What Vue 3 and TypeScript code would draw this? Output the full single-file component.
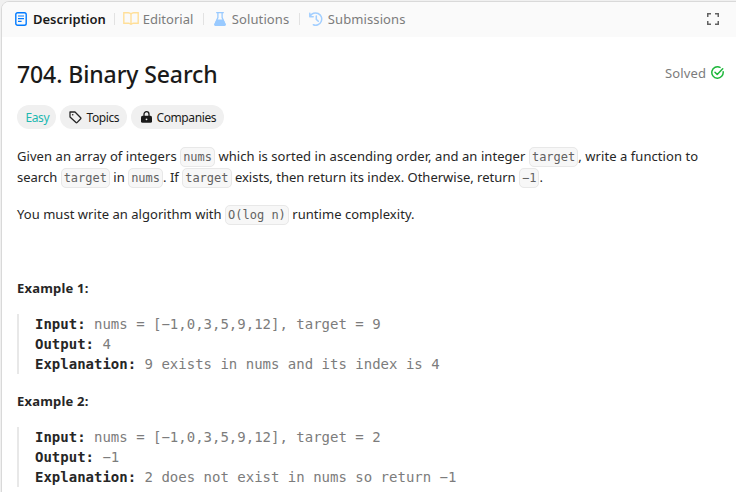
<script setup lang="ts">
interface Part {
  text: string
  code?: boolean
}
interface Row {
  label: string
  value: string
}
interface Example {
  title: string
  rows: Row[]
}

const statement: Part[][] = [
  [
    { text: 'Given an array of integers ' },
    { text: 'nums', code: true },
    { text: ' which is sorted in ascending order, and an integer ' },
    { text: 'target', code: true },
    { text: ', write a function to' },
  ],
  [
    { text: 'search ' },
    { text: 'target', code: true },
    { text: ' in ' },
    { text: 'nums', code: true },
    { text: '. If ' },
    { text: 'target', code: true },
    { text: ' exists, then return its index. Otherwise, return ' },
    { text: '-1', code: true },
    { text: '.' },
  ],
]

const examples: Example[] = [
  {
    title: 'Example 1:',
    rows: [
      { label: 'Input:', value: 'nums = [-1,0,3,5,9,12], target = 9' },
      { label: 'Output:', value: '4' },
      { label: 'Explanation:', value: '9 exists in nums and its index is 4' },
    ],
  },
  {
    title: 'Example 2:',
    rows: [
      { label: 'Input:', value: 'nums = [-1,0,3,5,9,12], target = 2' },
      { label: 'Output:', value: '-1' },
      { label: 'Explanation:', value: '2 does not exist in nums so return -1' },
    ],
  },
]
</script>

<template>
  <div class="page">
    <main class="panel">
      <header class="tabs">
        <div class="tab active">
          <svg class="icon doc" viewBox="0 0 12 14" fill="none" stroke="#007aff">
            <rect x="0.8" y="0.8" width="10.4" height="12.4" rx="1.8" stroke-width="1.4" />
            <path d="M3 4h6M3 6.6h6M3 9.3h3.6" stroke-width="1.2" />
          </svg>
          <span class="label">Description</span>
        </div>
        <i class="sep"></i>
        <div class="tab editorial">
          <svg class="icon book" viewBox="0 0 16 13" fill="none" stroke="#ffdf99" stroke-width="1.4">
            <path d="M8 2.2C7.4 1.2 6.5.8 5.3.8H.8v10.4h4.7c1.2 0 2 .4 2.5 1.2.5-.8 1.3-1.2 2.5-1.2h4.7V.8h-4.5C9.5.8 8.6 1.2 8 2.2zM8 2.2v10" />
          </svg>
          <span class="label">Editorial</span>
        </div>
        <i class="sep"></i>
        <div class="tab solutions">
          <svg class="icon flask" viewBox="0 0 12 14">
            <path d="M2.2.7h7.6M3.9.8v4.8L1.2 11.8M8.1.8v4.8l2.7 6.2" fill="none" stroke="#99caff" stroke-width="1.3" />
            <path d="M2.6 7.500h6.800l2.400 4.400c.5 1-.1 2-1.200 2H1.400c-1.100 0-1.700-1-1.200-2z" fill="#99caff" />
          </svg>
          <span class="label">Solutions</span>
        </div>
        <i class="sep"></i>
        <div class="tab submissions">
          <svg class="icon history" viewBox="0 0 14 14" fill="none" stroke="#a3cfff" stroke-width="1.5" stroke-linecap="round" stroke-linejoin="round">
            <path d="M.8 1.3v3.4h3.4M1.1 4.4A6.1 6.1 0 1 1 4.3 12.7M7.3 4v3.4l2 1.8" />
          </svg>
          <span class="label">Submissions</span>
        </div>
        <svg class="expand" viewBox="0 0 12 12" fill="none" stroke="#626262" stroke-width="1.5">
          <path d="M.75 4V.75H4M8 .75h3.25V4M11.25 8v3.25H8M4 11.25H.75V8" />
        </svg>
      </header>

      <section class="content">
        <div class="heading">
          <h1>704. Binary Search</h1>
          <div class="solved">
            <span class="solved-text">Solved</span>
            <svg class="check" viewBox="0 0 13 13" fill="none" stroke="#20b83d" stroke-width="1.5" stroke-linecap="round" stroke-linejoin="round">
              <path d="M9 1.35A5.7 5.7 0 1 0 12.15 5.7M4 6.3l2.2 2.2 5.5-5.7" />
            </svg>
          </div>
        </div>

        <div class="pills">
          <span class="pill easy"><span>Easy</span></span>
          <span class="pill topics">
            <svg class="tag" viewBox="0 0 13 13" fill="none" stroke="#262626" stroke-width="1.3" stroke-linejoin="round">
              <path d="M1 1h5l5.7 5.7a.7.7 0 0 1 0 1L8 11.6a.7.7 0 0 1-1 0L1 6z" />
              <circle cx="3.7" cy="3.7" r=".8" fill="#262626" stroke="none" />
            </svg>
            <span>Topics</span>
          </span>
          <span class="pill companies">
            <svg class="lock" viewBox="0 0 11 12">
              <path d="M3 5V3.2a2.5 2.5 0 0 1 5 0V5" fill="none" stroke="#1a1a1a" stroke-width="1.3" />
              <rect y="4.8" width="11" height="7" rx="1.6" fill="#1a1a1a" />
              <circle cx="5.5" cy="8.300" r=".9" fill="#f0f0f0" />
            </svg>
            <span>Companies</span>
          </span>
        </div>

        <p class="statement">
          <span v-for="(line, i) in statement" :key="i" class="line"><template v-for="(part, j) in line" :key="j"><code v-if="part.code">{{ part.text.replace('-', '−') }}</code><span v-else>{{ part.text }}</span></template></span>
        </p>
        <p class="constraint">You must write an algorithm with <code>O(log n)</code> runtime complexity.</p>

        <article v-for="ex in examples" :key="ex.title" class="example">
          <h2>{{ ex.title }}</h2>
          <div class="block">
            <div v-for="row in ex.rows" :key="row.label" class="row"><strong>{{ row.label }}</strong> {{ row.value.replace('-', '−') }}</div>
          </div>
        </article>
      </section>
    </main>
  </div>
</template>

<style>
body {
  background: #f0f0f0;
  overflow: hidden;
}
</style>

<style scoped>
.page {
  box-sizing: border-box;
  height: 492px;
  padding: 1px 0 0 1px;
  overflow: hidden;
  background: #f0f0f0;
  font-family: 'Noto Sans', 'Open Sans', sans-serif;
  color: #262626;
}
.panel {
  box-sizing: border-box;
  width: 745px;
  height: 510px;
  border: 1px solid #d9d9d9;
  border-radius: 8px;
  background: #fff;
  overflow: hidden;
}
.tabs {
  box-sizing: border-box;
  display: flex;
  align-items: center;
  width: 734px;
  height: 35px;
  padding: 0 17px 2px 13px;
  background: #fafafa;
  font-size: 13px;
  line-height: 20px;
  color: #7c7c7c;
}
.tab {
  display: flex;
  align-items: center;
}
.active {
  color: #1a1a1a;
  font-weight: 600;
}
.editorial { width: 72px; margin-left: -1px; }
.solutions { width: 77px; margin-left: 1px; letter-spacing: 0.1px; }
.submissions { letter-spacing: 0.1px; }
.icon {
  flex: none;
  height: 14px;
}
.doc { width: 12px; margin-right: 6px; }
.book { width: 16px; height: 13px; margin-right: 4px; }
.flask { width: 12px; margin-right: 6px; }
.history { width: 14px; margin-right: 5px; }
.label { white-space: nowrap; }
.sep {
  flex: none;
  width: 1px;
  height: 12px;
  margin: 0 9px 0 8px;
  background: #e2e2e2;
}
.expand {
  width: 12px;
  height: 12px;
  margin-left: auto;
}
.content {
  width: 734px;
  box-sizing: border-box;
  padding: 21px 12px 0 15px;
}
.heading {
  display: flex;
  align-items: center;
  justify-content: space-between;
  height: 32px;
}
h1 {
  margin: 0;
  font-size: 23px;
  line-height: 32px;
  font-weight: 500;
  letter-spacing: -0.1px;
  color: #1a1a1a;
}
.solved {
  display: flex;
  align-items: center;
  gap: 5px;
  padding-bottom: 3px;
  font-size: 13px;
  color: #7c7c7c;
}
.solved-text { letter-spacing: 0.1px; }
.check { width: 13px; height: 13px; }
.pills {
  display: flex;
  gap: 4px;
  margin-top: 15px;
}
.pill {
  box-sizing: border-box;
  display: flex;
  align-items: center;
  height: 24px;
  padding-left: 8.5px;
  border-radius: 12px;
  background: #f0f0f0;
  font-size: 12px;
  letter-spacing: -0.4px;
  color: #1a1a1a;
  white-space: nowrap;
}
.easy { width: 39px; color: #1cb8b0; }
.topics { width: 67px; gap: 5px; }
.companies { width: 93px; gap: 5px; padding-left: 9.5px; }
.tag { width: 13px; height: 13px; }
.lock { width: 11px; height: 12px; }
.statement,
.constraint {
  margin: 17px 0 0;
  font-size: 13px;
  line-height: 21px;
  white-space: nowrap;
}
.constraint {
  margin-top: 16px;
  letter-spacing: 0.04px;
}
.line {
  display: block;
  white-space: pre;
}
.line:first-child { letter-spacing: 0.065px; }
code {
  padding: 2px;
  border: 1px solid #e8e8e8;
  border-radius: 5px;
  background: #f7f7f7;
  font-family: 'DejaVu Sans Mono', monospace;
  font-size: 12px;
  line-height: 14px;
  letter-spacing: 0;
  color: #626262;
}
.example h2 {
  margin: 0;
  font-size: 13px;
  line-height: 21px;
  font-weight: 700;
  letter-spacing: 0.2px;
}
.constraint + .example { margin-top: 53px; }
.example + .example { margin-top: 17px; }
.block {
  margin-top: 15px;
  padding-left: 16px;
  border-left: 2px solid #e8e8e8;
  font-family: 'DejaVu Sans Mono', monospace;
  font-size: 14px;
  line-height: 20px;
  color: #7c7c7c;
  white-space: nowrap;
}
.block strong { color: #262626; }
</style>
